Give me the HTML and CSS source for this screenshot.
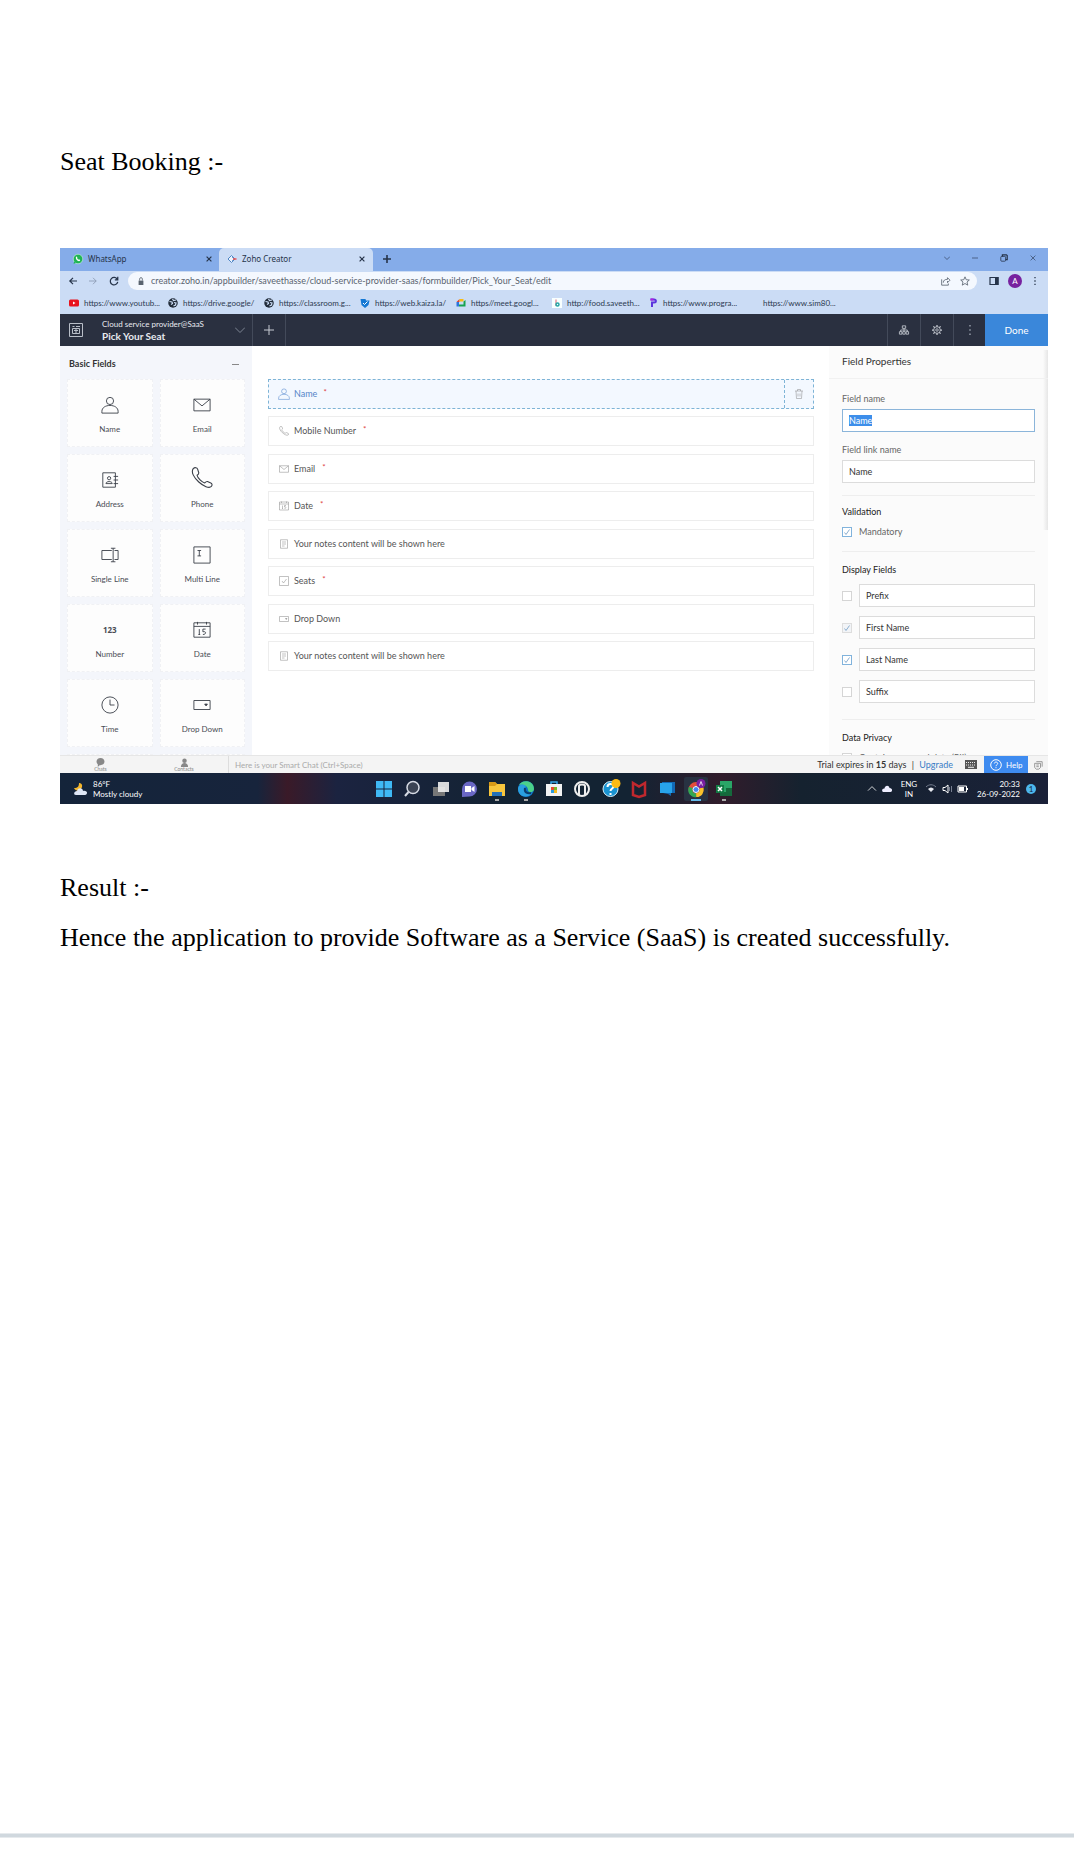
FILE: index.html
```html
<!DOCTYPE html>
<html lang="en">
<head>
<meta charset="utf-8">
<meta name="viewport" content="width=device-width, initial-scale=1">
<title>Seat Booking</title>
<link rel="stylesheet" href="styles.css">
</head>
<body>
<svg class="defs" aria-hidden="true">
  <symbol id="person" viewBox="0 0 20 20"><circle cx="10" cy="5.5" r="4"/><path d="M1 19v-2c0-4 4-6.500 9-6.500s9 2.500 9 6.500v2z"/></symbol>
  <symbol id="mail" viewBox="0 0 20 20"><path d="M1 3.500h18v13H1zM1 3.500l9 7.500 9-7.500"/></symbol>
  <symbol id="address" viewBox="0 0 20 20"><path d="M2 2h14v16H2zM14 6h5M14 10h5M14 14h5M5.500 14c0-3 7-3 7 0z"/><circle cx="9" cy="8" r="1.800"/></symbol>
  <symbol id="phone" viewBox="0 0 20 20"><path d="M2 1.500C3.500 0 5.500.5 6 2l1 3c.3 1-.8 2-1.500 2.500C6 10 10 14 12.500 14.500c.7-.8 1.500-1.500 2.500-1.300l3 1.300c1.300.6 1.500 2 .5 3.200C14.500 22 -2.500 8 2 1.500z"/></symbol>
  <symbol id="single" viewBox="0 0 20 20"><path d="M12 5H1v10h11M15 5h4v10h-4M11 2.500h5M11 17.500h5M13.500 2.500v15"/></symbol>
  <symbol id="multi" viewBox="0 0 20 20"><path d="M1 1h18v18H1zM5 5h4M5 11h4M7 5v6"/></symbol>
  <symbol id="date" viewBox="0 0 20 20"><path d="M1 2h18v16H1zM1 6h18M5 1v3M15 1v3M7 9v6M6 15h2M14 9h-3v3c4-1 4 3 0 3"/></symbol>
  <symbol id="clock" viewBox="0 0 20 20"><circle cx="10" cy="10" r="9"/><path d="M10 4v6h5"/></symbol>
  <symbol id="drop" viewBox="0 0 20 20"><path d="M1 5h18v10H1z"/><path d="M13 9h3l-1.500 2z" fill="currentColor"/></symbol>
  <symbol id="note" viewBox="0 0 20 20"><path d="M3 1.500h14v17H3zM6 6h8M6 10h8M6 14h5"/></symbol>
  <symbol id="check" viewBox="0 0 20 20"><path d="M1 1h18v18H1zM6 10l3 4 6-8"/></symbol>
  <symbol id="trash" viewBox="0 0 20 20"><path d="M2 4h16M7 4V1h6v3M4 4l1 15h10l1-15M8 9v6M12 9v6"/></symbol>
  <symbol id="x" viewBox="0 0 10 10"><path d="M1 1l8 8M9 1l-8 8"/></symbol>
  <symbol id="plus" viewBox="0 0 10 10"><path d="M5 0v10M0 5h10"/></symbol>
  <symbol id="down" viewBox="0 0 10 10"><path d="M0 2.500l5 5 5-5"/></symbol>
  <symbol id="dots" viewBox="0 0 10 10"><path d="M4.200 0h1.600v1.600H4.200zM4.200 4.200h1.600v1.600H4.200zM4.200 8.400h1.600V10H4.200z" fill="currentColor" stroke="none"/></symbol>
  <symbol id="globe" viewBox="0 0 20 20"><circle cx="10" cy="10" r="9.500" fill="#222c3a" stroke="none"/><path d="M3 7l5 1 1 3-3 2M9 2l2 3 5-1M12 9l4 1-1 4-4 2" stroke="#cbdcf5" stroke-width="2.500"/></symbol>
</svg>

<main class="document">
  <h1>Seat Booking :-</h1>

  <section class="window" aria-label="Zoho Creator form builder">
    <div class="tabs">
      <div class="tab">
        <svg class="i10" viewBox="0 0 20 20"><circle cx="10" cy="10" r="9.500" fill="#20b455" stroke="#e9fff0"/><path d="M1 19.500l1.500-5 3.500 3.500z" fill="#20b455" stroke="none"/><path d="M6 6c1-2 2-1 2.500 1s-.5 1 .5 2.500S11 11 12 11s3 1 2 2.500C11 17 4 10 6 6z" fill="#fff" stroke="none"/></svg>
        <span>WhatsApp</span>
        <button class="bare" aria-label="Close tab"><svg class="i6 bold"><use href="#x"/></svg></button>
      </div>
      <div class="tab active">
        <svg class="i10" viewBox="0 0 20 20"><path d="M9 3l7 7-7 7-7-7z" stroke="#4f86c4" stroke-width="2" fill="#eef4fd"/><path d="M10 6l4 4-4 4" stroke="#4f86c4" stroke-width="1.500"/><path d="M12 8.500h7v3h-7z" fill="#e55" stroke="none"/></svg>
        <span>Zoho Creator</span>
        <button class="bare" aria-label="Close tab"><svg class="i6 bold"><use href="#x"/></svg></button>
      </div>
      <button class="bare new-tab" aria-label="New tab"><svg class="i8 bold"><use href="#plus"/></svg></button>
      <div class="controls">
        <button class="bare" aria-label="Search tabs"><svg class="i6"><use href="#down"/></svg></button>
        <button class="bare" aria-label="Minimize"><svg class="i6" viewBox="0 0 10 10"><path d="M0 5h10"/></svg></button>
        <button class="bare" aria-label="Restore"><svg class="i8" viewBox="0 0 10 10"><rect x="1" y="3" width="6" height="6" rx="1"/><path d="M3 3V1h5l1 1v5H7" stroke-width="1.500"/></svg></button>
        <button class="bare" aria-label="Close"><svg class="i6"><use href="#x"/></svg></button>
      </div>
    </div>

    <div class="address">
      <button class="bare" aria-label="Back"><svg class="i8" viewBox="0 0 10 10"><path d="M10 5H1M5 1L1 5l4 4" stroke-width="1.500"/></svg></button>
      <button class="bare dim" aria-label="Forward"><svg class="i8" viewBox="0 0 10 10"><path d="M0 5h9M5 1l4 4-4 4"/></svg></button>
      <button class="bare" aria-label="Reload"><svg class="i10" viewBox="0 0 12 12"><path d="M10 4a4.500 4.500 0 1 0 .5 3M10.500 1v3.500H7" stroke-width="1.500"/></svg></button>
      <div class="omnibox">
        <svg class="i8" viewBox="0 0 10 10"><path d="M2 4.500h6V10H2z" fill="currentColor" stroke="none"/><path d="M3.300 4.500V2.500a1.700 1.700 0 0 1 3.400 0v2"/></svg>
        <input type="text" aria-label="Address" value="creator.zoho.in/appbuilder/saveethasse/cloud-service-provider-saas/formbuilder/Pick_Your_Seat/edit">
        <svg class="i10" viewBox="0 0 12 12"><path d="M2 4v7h8V9M4 8c0-3 2-4 5-4V2l3 3-3 3V6"/></svg>
        <svg class="i10" viewBox="0 0 12 12"><path d="M6 1l1.500 3.500 3.700.3-2.800 2.400.9 3.800L6 9l-3.300 2 .9-3.800L.8 4.800l3.700-.3z"/></svg>
      </div>
      <div class="profile">
        <svg class="i10" viewBox="0 0 10 10"><path d="M1 1.500h8v7H1z" stroke-width="1.200"/><path d="M6 1h3.500v8H6z" fill="currentColor" stroke="none"/></svg>
        <span class="avatar">A</span>
        <svg class="i8"><use href="#dots"/></svg>
      </div>
    </div>

    <nav class="bookmarks">
      <a href="#"><svg class="i10" viewBox="0 0 20 20"><rect y="3" width="20" height="14" rx="3" fill="#e8121d" stroke="none"/><path d="M8 7l5 3-5 3z" fill="#fff" stroke="none"/></svg>https://www.youtub...</a>
      <a href="#"><svg class="i10"><use href="#globe"/></svg>https://drive.google/</a>
      <a href="#"><svg class="i10"><use href="#globe"/></svg>https://classroom.g...</a>
      <a href="#"><svg class="i10" viewBox="0 0 20 20"><path d="M1 2h10l1 3h7l-2 9-7 6-7-6z" fill="#1478d4" stroke="none"/><path d="M6 10l3 3 6-6" stroke="#fff" stroke-width="2"/></svg>https://web.kaiza.la/</a>
      <a href="#"><svg class="i10" viewBox="0 0 20 20"><path d="M1 8l6-6v6z" fill="#e24133" stroke="none"/><path d="M1 8h5v9H1z" fill="#2b75dd" stroke="none"/><path d="M7 2h8v5H7z" fill="#f6bb16" stroke="none"/><path d="M6 13h9V7l4-3v13H6z" fill="#17a351" stroke="none"/></svg>https//meet.googl...</a>
      <a href="#"><svg class="i10" viewBox="0 0 20 20"><path d="M0 0h20v20H0z" fill="#f8ffff" stroke="none"/><path d="M8 3v13" stroke="#de6172" stroke-width="2"/><circle cx="11" cy="13" r="3" stroke="#25a6a6" stroke-width="3"/></svg>http://food.saveeth...</a>
      <a href="#"><svg class="i10" viewBox="0 0 20 20"><path d="M5 3h7c5 0 5 6 0 6H8v9" stroke="#5b35dd" stroke-width="4"/><path d="M5 3h6" stroke="#b21fe0" stroke-width="4"/></svg>https://www.progra...</a>
      <a href="#" class="plain">https://www.sim80...</a>
    </nav>

    <header class="appbar">
      <svg class="i14 logo" viewBox="0 0 14 14"><path d="M.5.5h13v13H.5zM3.500 5.500h7v5h-7zM3.500 3.500h2M7 3.500h4M5 7.500h4M7 5.500v5"/></svg>
      <div class="app-title"><span>Cloud service provider@SaaS</span><strong>Pick Your Seat</strong></div>
      <svg class="i10 faint"><use href="#down"/></svg>
      <button class="cell first" aria-label="Add"><svg class="i10"><use href="#plus"/></svg></button>
      <div class="tools">
        <button class="cell" aria-label="Workflow"><svg class="i10" viewBox="0 0 12 12"><path d="M4 1h4v3H4zM6 4v4M2 8V6h8v2M.5 8h3v3h-3zM4.500 8h3v3h-3zM8.500 8h3v3h-3z"/></svg></button>
        <button class="cell" aria-label="Settings"><svg class="i10" viewBox="0 0 12 12"><circle cx="6" cy="6" r="4"/><circle cx="6" cy="6" r="1.500"/><path d="M6 0v2M6 10v2M0 6h2M10 6h2M1.700 1.700l1.500 1.500M8.800 8.800l1.500 1.500M10.300 1.700L8.800 3.200M3.200 8.800l-1.500 1.500" stroke-width="1.500"/></svg></button>
        <button class="cell more" aria-label="More"><svg class="i10"><use href="#dots"/></svg></button>
        <button class="done">Done</button>
      </div>
    </header>

    <div class="workspace">
      <aside class="palette">
        <h2>Basic Fields<span class="minus"></span></h2>
        <div class="cards">
          <button><svg><use href="#person"/></svg>Name</button>
          <button><svg><use href="#mail"/></svg>Email</button>
          <button><svg><use href="#address"/></svg>Address</button>
          <button><svg class="large"><use href="#phone"/></svg>Phone</button>
          <button><svg><use href="#single"/></svg>Single Line</button>
          <button><svg><use href="#multi"/></svg>Multi Line</button>
          <button><b>123</b>Number</button>
          <button><svg><use href="#date"/></svg>Date</button>
          <button><svg><use href="#clock"/></svg>Time</button>
          <button><svg><use href="#drop"/></svg>Drop Down</button>
          <button aria-label="More fields"></button>
          <button aria-label="More fields"></button>
        </div>
      </aside>

      <section class="canvas">
        <ul>
          <li class="selected"><svg class="i12"><use href="#person"/></svg>Name<sup>*</sup><button class="bare remove" aria-label="Delete field"><svg class="i10"><use href="#trash"/></svg></button></li>
          <li><svg><use href="#phone"/></svg>Mobile Number<sup>*</sup></li>
          <li><svg><use href="#mail"/></svg>Email<sup>*</sup></li>
          <li><svg><use href="#date"/></svg>Date<sup>*</sup></li>
          <li><svg><use href="#note"/></svg>Your notes content will be shown here</li>
          <li><svg><use href="#check"/></svg>Seats<sup>*</sup></li>
          <li><svg><use href="#drop"/></svg>Drop Down</li>
          <li><svg><use href="#note"/></svg>Your notes content will be shown here</li>
        </ul>
      </section>

      <aside class="properties">
        <h2>Field Properties</h2>
        <div class="group naming">
          <label for="field-name">Field name</label>
          <input class="focus" type="text" id="field-name" value="Name">
          <label for="link-name">Field link name</label>
          <input type="text" id="link-name" value="Name">
        </div>
        <div class="group validation">
          <h3>Validation</h3>
          <label class="tick"><input type="checkbox" checked>Mandatory</label>
        </div>
        <div class="group display">
          <h3>Display Fields</h3>
          <div class="row"><input type="checkbox" aria-label="Show prefix"><input type="text" aria-label="Prefix label" value="Prefix"></div>
          <div class="row"><input type="checkbox" aria-label="Show first name" checked disabled><input type="text" aria-label="First name label" value="First Name"></div>
          <div class="row"><input type="checkbox" aria-label="Show last name" checked><input type="text" aria-label="Last name label" value="Last Name"></div>
          <div class="row"><input type="checkbox" aria-label="Show suffix"><input type="text" aria-label="Suffix label" value="Suffix"></div>
        </div>
        <div class="group">
          <h3>Data Privacy</h3>
          <label class="tick"><input type="checkbox">Contains personal data (PII)</label>
        </div>
      </aside>
    </div>

    <div class="chatbar">
      <button class="bare"><svg class="i10" viewBox="0 0 10 10"><path d="M5 0C9 0 11 4 8 7c-2 1-3 1-4 1l-2 2V7C-1 4 1 0 5 0z" fill="currentColor" stroke="none"/></svg>Chats</button>
      <button class="bare"><svg class="i10" viewBox="0 0 10 10"><circle cx="5" cy="3" r="2.500" fill="currentColor" stroke="none"/><path d="M1 10c0-6 8-6 8 0z" fill="currentColor" stroke="none"/></svg>Contacts</button>
      <input type="text" aria-label="Smart Chat" placeholder="Here is your Smart Chat (Ctrl+Space)">
      <div class="trial">Trial expires in <b>15</b> days <span>|</span> <a href="#">Upgrade</a></div>
      <svg class="keys" viewBox="0 0 12 9"><path d="M0 0h12v9H0z" fill="#555" stroke="none"/><path d="M1 2.500h10M1 5h10" stroke="#eee" stroke-dasharray="1 1"/><path d="M3 7.300h6" stroke="#eee"/></svg>
      <button class="help"><svg class="i12" viewBox="0 0 12 12"><circle cx="6" cy="6" r="5.300"/><path d="M4.300 4.500c.2-2 3.400-1.800 3.400 0C7.700 5.800 6 5.700 6 7.200M6 8.200v1"/></svg>Help</button>
      <svg class="i10 corner" viewBox="0 0 12 12"><path d="M2 4h7v5L7 11H4L2 9zM4 2h7v6M4 6h3M4 8h3"/></svg>
    </div>

    <footer class="taskbar">
      <div class="weather">
        <svg class="i14" viewBox="0 0 14 14"><path d="M6 1c0 3-1 5-5 5 2 4 7 3 8-1S6 1 6 1z" fill="#f4b62c" stroke="none"/><path d="M3 13c-3 0-2-4 1-4 1-4 6-3 6 0 5-1 5 4 2 4z" fill="#dfe7f6" stroke="none"/></svg>
        <div>86°F<br>Mostly cloudy</div>
      </div>
      <div class="apps">
        <svg viewBox="0 0 24 24"><path d="M4 4h7.500v7.500H4zM12.500 4H20v7.500h-7.500zM4 12.500h7.500V20H4zM12.500 12.500H20V20h-7.500z" fill="#3fb9f5" stroke="none"/></svg>
        <svg viewBox="0 0 24 24"><circle cx="13" cy="10.500" r="6" stroke="#d6dae4" stroke-width="1.500" fill="#3b4354"/><path d="M8.500 15L5 19" stroke="#d6dae4" stroke-width="2"/></svg>
        <svg viewBox="0 0 24 24"><path d="M4 10h12v9H4z" fill="#777" stroke="none"/><path d="M9 5h11v10H9z" fill="#eee" fill-opacity=".9" stroke="none"/></svg>
        <svg viewBox="0 0 24 24"><path d="M5 20V12a7.500 7.500 0 1 1 7.500 7.500z" fill="#6967c4" stroke="none"/><path d="M8 9h6v6H8zM14.500 11l3-2v6l-3-2z" fill="#fff" stroke="none"/></svg>
        <svg viewBox="0 0 24 24"><path d="M4 5h6l2 2h8v12H4z" fill="#f8c63d" stroke="none"/><path d="M4 5h6l2 2-2 2H4z" fill="#d99a17" stroke="none"/><path d="M7 15h10v4H7z" fill="#2470b7" stroke="none"/><path d="M10 23h4" stroke="#aaa" stroke-width="2"/></svg>
        <svg viewBox="0 0 24 24"><circle cx="12" cy="12" r="8" fill="#0c6fc4" stroke="none"/><path d="M5 8c3-6 15-5 15 4 0 4-6 4-6 1 0-5-6-6-9-5z" fill="#4bd08a" stroke="none"/><path d="M4 12c0-5 7-6 8-2-4 2-1 8 6 6-4 6-14 4-14-4z" fill="#2a9fe0" stroke="none"/><path d="M11 11c-1 4 2 6 6 5" stroke="#0b3d6e" stroke-width="2"/><path d="M10 23h4" stroke="#aaa" stroke-width="2"/></svg>
        <svg viewBox="0 0 24 24"><path d="M9 8V5h6v3" stroke="#38a7e8" stroke-width="1.500"/><path d="M4 7h16v12H4z" fill="#f2f2f2" stroke="none"/><path d="M9 10h3v3H9z" fill="#e64b2f" stroke="none"/><path d="M12 10h3v3h-3z" fill="#76b82a" stroke="none"/><path d="M9 13h3v3H9z" fill="#2a9be0" stroke="none"/><path d="M12 13h3v3h-3z" fill="#f5b91c" stroke="none"/></svg>
        <svg viewBox="0 0 24 24"><circle cx="12" cy="12" r="7" stroke="#eee" stroke-width="2"/><path d="M9 18V9c0-2 6-2 6 0v9" stroke="#eee" stroke-width="2"/></svg>
        <svg viewBox="0 0 24 24"><circle cx="11.500" cy="12" r="7.500" fill="#1a94d2" stroke="#d8effa"/><path d="M8.500 10c0-4 6-4 6-.5 0 2-3 2-3 4.500M11.500 16v2" stroke="#fff" stroke-width="2"/><circle cx="17" cy="6.500" r="4.500" fill="#fdbb13" stroke="none"/></svg>
        <svg viewBox="0 0 24 24"><path d="M6 18V6l6 3.500L18 6v12l-6 2z" stroke="#c0282e" stroke-width="2.500"/></svg>
        <svg viewBox="0 0 24 24"><path d="M7 5h13v11H7z" fill="#1269b5" stroke="none"/><path d="M5 6h12v10H5z" fill="#28a3ea" stroke="none"/><path d="M8 16h8v3l-3-2z" fill="#1269b5" stroke="none"/></svg>
        <svg viewBox="0 0 24 24"><rect x="0" y="0" width="24" height="24" rx="2" fill="#283242" stroke="none"/><circle cx="12" cy="12.500" r="5.500" stroke="#e44c3c" stroke-width="4"/><path d="M6.800 10.500c-2 5 2 8.500 5.500 7.500" stroke="#31a853" stroke-width="4"/><path d="M12.300 18c4 0 6-3 5.200-7" stroke="#f9c22b" stroke-width="4"/><circle cx="12" cy="12.500" r="3" fill="#4384f3" stroke="#fff"/><circle cx="17" cy="6.500" r="4.500" fill="#7a1fa2" stroke="none"/><path d="M15.500 8.500L17 4.500l1.500 4" stroke="#fff" stroke-width=".8"/><path d="M7 23h10" stroke="#65b9ea" stroke-width="2"/></svg>
        <svg viewBox="0 0 24 24"><path d="M8 4h12v15H8z" fill="#2aa567" stroke="none"/><path d="M14 11h6v8H8v-4h6z" fill="#15693c" stroke="none"/><path d="M4 8h8v8H4z" fill="#117a43" stroke="none"/><path d="M6 10l4 4M10 10l-4 4" stroke="#fff" stroke-width="1.500"/><path d="M10 23h4" stroke="#aaa" stroke-width="2"/></svg>
      </div>
      <div class="tray">
        <svg class="i8" viewBox="0 0 10 10"><path d="M0 7l5-5 5 5"/></svg>
        <svg class="i10" viewBox="0 0 10 10"><path d="M2 8C-1 8 0 4 2.500 4.500 3 1 7 1 7.500 4 11 4 10.500 8 8.500 8z" fill="#eef" stroke="none"/></svg>
        <div class="lang">ENG<br>IN</div>
        <svg class="i10" viewBox="0 0 10 10"><path d="M0 3c3-3 7-3 10 0" stroke="#777f90"/><path d="M2 5c2-2 4-2 6 0L5 8z" fill="#e8eaf0" stroke="none"/></svg>
        <svg class="i10" viewBox="0 0 10 10"><path d="M1 3.500h2L6 1v8L3 6.500H1z"/><path d="M7.500 3v4M9.500 2v6" stroke="#777f90"/></svg>
        <svg class="i10" viewBox="0 0 10 10"><path d="M0 2h8.500v6H0zM9.500 4v2"/><path d="M1 3h5v4H1z" fill="#fff" stroke="none"/></svg>
        <div class="time">20:33<br>26-09-2022</div>
        <span class="badge">1</span>
      </div>
    </footer>
  </section>

  <h1>Result :-</h1>
  <p>Hence the application to provide Software as a Service (SaaS) is created successfully.</p>
</main>
<hr>
<script src="script.js"></script>
</body>
</html>
```
FILE: styles.css
```css
* { box-sizing: border-box; }

body {
  margin: 0;
  min-height: 100vh;
  display: flex;
  flex-direction: column;
  background: #fff;
  color: #000;
}

.defs { position: absolute; width: 0; height: 0; }

svg {
  width: 10px;
  height: 10px;
  flex: none;
  fill: none;
  stroke: currentColor;
  overflow: visible;
}
svg.i6 { width: 6px; height: 6px; }
svg.i8 { width: 8px; height: 8px; }
svg.i10 { width: 10px; height: 10px; }
svg.i12 { width: 12px; height: 12px; }
svg.i14 { width: 14px; height: 14px; }
svg.bold { stroke-width: 2; }

button, input { font: inherit; color: inherit; }
button { padding: 0; border: 0; }
a { color: inherit; text-decoration: none; }
.bare { display: flex; align-items: center; justify-content: center; background: none; }

/* Document text */
.document {
  flex: 1;
  padding: 142px 26px 40px 60px;
  font-family: "Liberation Serif", serif;
  font-size: 26px;
  line-height: 40px;
}
.document > h1 { margin: 0; font-size: 26px; font-weight: 400; }
.document > p { margin: 10px 0 0; }
hr {
  width: 100%;
  height: 5px;
  margin: 0 0 11px;
  border: solid #e6eaed;
  border-width: 1px 0;
  background: #d0d8de;
}

/* Browser window */
.window {
  margin: 66px 0 64px;
  font-family: Lato, sans-serif;
  font-size: 8px;
  line-height: 10px;
  color: #333;
}
.tabs { display: flex; height: 23px; background: #85ace9; color: #26344a; }
.tab { display: flex; align-items: center; gap: 5px; width: 159px; padding: 3px 7px 4px 13px; }
.tab.active {
  width: 154px;
  padding: 3px 8px 4px 8px;
  background: #cbdcf5;
  border-radius: 5px 5px 0 0;
}
.tab span { flex: 1; font-family: "Noto Sans", sans-serif; }
.new-tab { width: 28px; padding-bottom: 2px; }
.controls { display: flex; gap: 22px; margin-left: auto; padding: 0 12px 4px 0; }

.address {
  display: flex;
  align-items: center;
  gap: 12px;
  height: 20px;
  padding-left: 9px;
  background: #cbdcf5;
  color: #26344a;
}
.address > .dim { color: #8695ad; }
.omnibox {
  flex: 1;
  display: flex;
  align-items: center;
  gap: 6px;
  height: 18px;
  margin-left: -3px;
  padding: 0 7px 0 9px;
  border-radius: 9px;
  background: #f4f8fe;
  color: #59636f;
}
.omnibox input {
  flex: 1;
  min-width: 0;
  padding: 0;
  border: 0;
  background: none;
  font-size: 9px;
  line-height: 14px;
}
.omnibox svg:last-child { margin-left: 4px; }
.profile { display: flex; align-items: center; gap: 9px; width: 59px; }
.avatar {
  width: 14px;
  height: 14px;
  border-radius: 50%;
  background: #77219f;
  color: #fff;
  line-height: 14px;
  text-align: center;
}
.bookmarks {
  display: flex;
  height: 23px;
  padding-left: 9px;
  background: #cbdcf5;
  color: #2b3a50;
}
.bookmarks a { display: flex; align-items: center; gap: 5px; width: 96px; white-space: nowrap; }
.bookmarks a:first-child { width: 99px; }
.bookmarks .plain { padding-left: 19px; }

/* Application header */
.appbar { display: flex; align-items: center; height: 32px; background: #2a3040; color: #e8eaf0; }
.logo { margin-left: 9px; color: #b9bec8; }
.app-title { display: flex; flex-direction: column; gap: 2px; flex: 0 0 152px; margin-left: 19px; }
.app-title strong { font-size: 10px; }
.faint { color: #7d8492; margin-left: -19px; }
.appbar .cell {
  display: flex;
  align-items: center;
  justify-content: center;
  width: 33px;
  height: 32px;
  border-left: 1px solid #434a5a;
  background: none;
  color: #c7cbd3;
}
.appbar .first { width: 34px; margin-left: 7px; border-right: 1px solid #434a5a; }
.appbar .more { width: 32px; color: #8d94a1; }
.tools { display: flex; margin-left: auto; }
.done { width: 63px; background: #3a87da; color: #fff; font-size: 10px; }

/* Builder */
.workspace { display: flex; height: 409px; overflow: hidden; background: #fff; }
.palette { flex: 0 0 192px; padding: 0 7px; background: #f4f6fb; }
.palette h2 {
  display: flex;
  align-items: center;
  justify-content: space-between;
  height: 33px;
  margin: 0;
  padding: 3px 6px 0 2px;
  font-size: 9px;
}
.minus { width: 7px; height: 1px; background: #888; }
.cards { display: grid; grid-template-columns: 1fr 1fr; grid-auto-rows: 68px; gap: 7px; }
.cards button {
  display: flex;
  flex-direction: column;
  align-items: center;
  gap: 10px;
  padding-top: 16px;
  border: 1px dashed #f0f1f4;
  background: #fdfdfd;
  color: #4a4d55;
}
.cards svg { width: 18px; height: 18px; color: #3a3f48; }
.cards svg.large { width: 22px; height: 22px; margin: -4px 0 0; }
.cards b { height: 18px; line-height: 18px; font-family: "Open Sans", sans-serif; }

.canvas { flex: 1; padding: 33px 15px 0 16px; font-size: 9px; }
.canvas ul {
  display: flex;
  flex-direction: column;
  justify-content: space-between;
  height: 292px;
  margin: 0;
  padding: 0;
  list-style: none;
}
.canvas li {
  display: flex;
  align-items: center;
  height: 30px;
  gap: 5px;
  padding-left: 10px;
  border: 1px solid #ededed;
  background: #fff;
  color: #555;
}
.canvas li svg { color: #858585; }
.canvas li.selected { padding-left: 9px; gap: 4px; border: 1px dashed #7eb4d6; background: #f3f8ff; color: #5585c8; }
.canvas .selected > svg { color: #5f91d2; }
.canvas sup { margin: 0 0 4px 2px; color: #e04444; line-height: 8px; font-size: 8px; }
.remove { align-self: stretch; width: 29px; margin-left: auto; border-left: 1px dashed #7eb4d6; }

.properties {
  flex: 0 0 219px;
  font-size: 9px;
  background: linear-gradient(to left, #e6e6e6, #fbfbfb) right 4px / 5px 180px no-repeat #fbfbfb;
}
.properties h2 { height: 33px; margin: 0; padding-left: 13px; border-bottom: 1px solid #f1f1f1; font-size: 10px; font-weight: 400; line-height: 31px; }
.group { margin: 0 13px; padding: 13px 0; border-bottom: 1px solid #eee; }
.group label { display: block; margin-bottom: 5px; color: #666; }
.group input[type="text"] {
  display: block;
  width: 100%;
  height: 23px;
  padding: 0 6px;
  border: 1px solid #dcdcdc;
  background: #fff;
  color: #333;
}
.group input.focus { margin-bottom: 13px; border-color: #8bb5da; outline: 0; }
.focus::selection { background: #3d8eea; color: #fff; }
.group h3 { margin: 0; font-size: 9px; font-weight: 400; color: #222; }
.group .tick { display: flex; align-items: center; gap: 7px; height: 10px; margin: 10px 0 0; }
.group.naming { padding: 15px 0 12px; }
.group.validation { padding: 11px 0 14px; }
.group.display { padding-bottom: 16px; }
.group .row { display: flex; align-items: center; gap: 7px; margin-top: 9px; }
.group input[type="checkbox"] {
  appearance: none;
  flex: none;
  width: 10px;
  height: 10px;
  margin: 0;
  border: 1px solid #d5d5d5;
  background: #fff;
}
.group input[type="checkbox"]:checked {
  border-color: #81b3dc;
  background: #fff url("data:image/svg+xml,%3Csvg xmlns='http://www.w3.org/2000/svg' viewBox='0 0 8 8'%3E%3Cpath d='M1.500 4.500l1.500 2 3.500-5' fill='none' stroke='%238aaed0'/%3E%3C/svg%3E") center / 8px 8px no-repeat;
}
.group input[type="checkbox"]:disabled { border-color: #ddd; background-color: #f2f4f7; }

/* Bars at the bottom */
.chatbar { display: flex; align-items: center; height: 18px; border-top: 1px solid #e6e6e6; background: #f4f4f4; }
.chatbar .bare { flex-direction: column; width: 81px; font-size: 5px; line-height: 4px; color: #888; }
.chatbar .bare + .bare { width: 86px; margin-right: 1px; }
.chatbar .bare svg { width: 9px; height: 9px; }
.chatbar input { flex: 1; align-self: stretch; min-width: 0; padding: 0 6px; border: 0; border-left: 1px solid #ddd; background: none; }
.chatbar input::placeholder { color: #aaa; }
.trial { font-size: 9px; }
.trial span { margin: 0 3px; }
.trial a { color: #3a7cc6; }
.chatbar .keys { width: 12px; height: 9px; margin: 0 7px 0 12px; }
.help { display: flex; align-items: center; gap: 4px; align-self: stretch; width: 44px; padding-left: 6px; background: #3e8bf0; color: #fff; }
.corner { margin: 0 5px; color: #888; }

.taskbar {
  display: grid;
  grid-template-columns: 1fr 364px 1fr;
  align-items: center;
  height: 31px;
  background: linear-gradient(90deg, #14243a 0, #17243c 20%, #3a1a28 23%, #1b2340 28%, #132333 45%, #132333 58%, #311c2b 67%, #15222f 75%, #1a2138 100%);
  color: #fff;
}
.weather { display: flex; align-items: center; gap: 6px; padding-left: 13px; }
.apps { display: flex; justify-content: space-between; }
.apps svg { width: 24px; height: 24px; }
.tray { display: flex; align-items: center; justify-content: flex-end; gap: 6px; padding-right: 12px; }
.lang { width: 22px; text-align: center; }
.time { margin-left: 3px; text-align: right; }
.badge { width: 10px; height: 10px; border-radius: 50%; background: #4cb7ee; color: #14243a; text-align: center; }
```
FILE: script.js
```js
// The name of the selected field is ready to be typed over.
const fieldName = document.getElementById("field-name");
fieldName.focus({ preventScroll: true });
fieldName.select();
```
